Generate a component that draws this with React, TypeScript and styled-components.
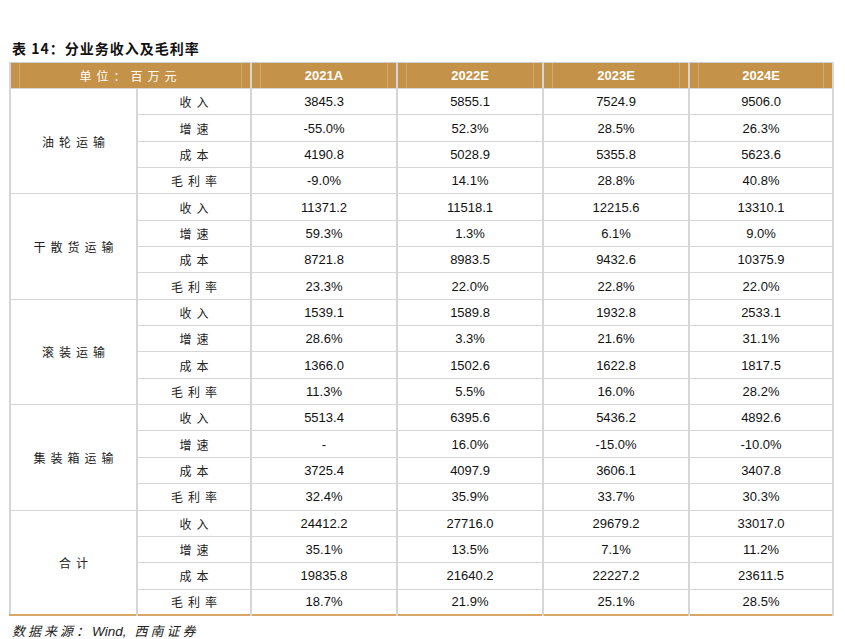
import React from 'react'
import styled, { createGlobalStyle } from 'styled-components'

const GRID = '#d6d6d6'
const GOLD = '#c49248'
const CJK = '"Noto Sans CJK SC", "Liberation Sans", sans-serif'
const NUM = '"Liberation Sans", Arial, sans-serif'

const GlobalStyle = createGlobalStyle`
  html, body {
    margin: 0;
    padding: 0;
    background: #ffffff;
  }
`

const Page = styled.div`
  width: 845px;
  height: 639px;
  padding: 38px 0 0 9px;
  box-sizing: border-box;
  overflow: hidden;
`

const Title = styled.div`
  font-family: ${CJK};
  font-weight: 700;
  font-size: 14px;
  line-height: 20px;
  color: #111;
  padding-left: 3px;
  margin-bottom: 4px;
  letter-spacing: 1px;
`

const Table = styled.table`
  width: 823px;
  table-layout: fixed;
  border-collapse: collapse;
  border-top: 1px solid #cfcfcf;
  border-left: 2px solid ${GRID};
  border-right: 2px solid ${GRID};
  border-bottom: 2px solid #d8a765;
`

const HeadRow = styled.tr`
  height: 25px;
  background: ${GOLD};
`

const HeadCell = styled.th<{ cjk?: boolean }>`
  padding: 0 8px;
  border-left: 2px solid ${GRID};
  border-right: 2px solid ${GRID};
  color: #fff;
  font-family: ${(p) => (p.cjk ? CJK : NUM)};
  font-weight: ${(p) => (p.cjk ? 400 : 700)};
  font-size: ${(p) => (p.cjk ? '12px' : '13px')};
  letter-spacing: ${(p) => (p.cjk ? '5px' : '0')};
  text-align: center;
`

const HeadInner = styled.div`
  height: 25px;
  line-height: 25px;
  border-left: 1px solid rgba(255, 255, 255, 0.22);
  border-right: 1px solid rgba(255, 255, 255, 0.22);
`

const Row = styled.tr`
  height: 26.35px;
`

const GroupCell = styled.td`
  border: 1px solid ${GRID};
  border-right-width: 2px;
  font-family: ${CJK};
  font-size: 12px;
  letter-spacing: 5px;
  color: #222;
  text-align: center;
  vertical-align: middle;
  padding: 0 0 0 5px;
`

const LabelCell = styled.td`
  border-top: 1px solid ${GRID};
  border-bottom: 1px solid ${GRID};
  border-right: 2px solid ${GRID};
  font-family: ${CJK};
  font-size: 12px;
  letter-spacing: 5px;
  color: #222;
  text-align: center;
  padding: 0 0 0 5px;
`

const ValueCell = styled.td`
  border-top: 1px solid ${GRID};
  border-bottom: 1px solid ${GRID};
  border-right: 2px solid ${GRID};
  font-family: ${NUM};
  font-size: 13px;
  color: #111;
  text-align: center;
  padding: 0;
`

const Source = styled.div`
  margin-top: 6px;
  padding-left: 3px;
  font-family: ${CJK};
  font-style: italic;
  font-size: 13px;
  line-height: 18px;
  letter-spacing: 3px;
  color: #222;
`

const SourceLatin = styled.span`
  font-family: ${NUM};
  font-size: 13.5px;
  letter-spacing: 0;
  margin-right: 8px;
`

const metrics = ['收入', '增速', '成本', '毛利率']

const groups: { name: string; rows: string[][] }[] = [
  {
    name: '油轮运输',
    rows: [
      ['3845.3', '5855.1', '7524.9', '9506.0'],
      ['-55.0%', '52.3%', '28.5%', '26.3%'],
      ['4190.8', '5028.9', '5355.8', '5623.6'],
      ['-9.0%', '14.1%', '28.8%', '40.8%'],
    ],
  },
  {
    name: '干散货运输',
    rows: [
      ['11371.2', '11518.1', '12215.6', '13310.1'],
      ['59.3%', '1.3%', '6.1%', '9.0%'],
      ['8721.8', '8983.5', '9432.6', '10375.9'],
      ['23.3%', '22.0%', '22.8%', '22.0%'],
    ],
  },
  {
    name: '滚装运输',
    rows: [
      ['1539.1', '1589.8', '1932.8', '2533.1'],
      ['28.6%', '3.3%', '21.6%', '31.1%'],
      ['1366.0', '1502.6', '1622.8', '1817.5'],
      ['11.3%', '5.5%', '16.0%', '28.2%'],
    ],
  },
  {
    name: '集装箱运输',
    rows: [
      ['5513.4', '6395.6', '5436.2', '4892.6'],
      ['-', '16.0%', '-15.0%', '-10.0%'],
      ['3725.4', '4097.9', '3606.1', '3407.8'],
      ['32.4%', '35.9%', '33.7%', '30.3%'],
    ],
  },
  {
    name: '合计',
    rows: [
      ['24412.2', '27716.0', '29679.2', '33017.0'],
      ['35.1%', '13.5%', '7.1%', '11.2%'],
      ['19835.8', '21640.2', '22227.2', '23611.5'],
      ['18.7%', '21.9%', '25.1%', '28.5%'],
    ],
  },
]

const years = ['2021A', '2022E', '2023E', '2024E']

export default function App() {
  return (
    <Page>
      <GlobalStyle />
      <Title>表 14：分业务收入及毛利率</Title>
      <Table>
        <colgroup>
          <col style={{ width: 127 }} />
          <col style={{ width: 114 }} />
          <col style={{ width: 146 }} />
          <col style={{ width: 146 }} />
          <col style={{ width: 146 }} />
          <col style={{ width: 144 }} />
        </colgroup>
        <thead>
          <HeadRow>
            <HeadCell colSpan={2} cjk>
              <HeadInner>单位：百万元</HeadInner>
            </HeadCell>
            {years.map((y) => (
              <HeadCell key={y}>
                <HeadInner>{y}</HeadInner>
              </HeadCell>
            ))}
          </HeadRow>
        </thead>
        <tbody>
          {groups.map((g) =>
            g.rows.map((vals, i) => (
              <Row key={g.name + i}>
                {i === 0 && <GroupCell rowSpan={4}>{g.name}</GroupCell>}
                <LabelCell>{metrics[i]}</LabelCell>
                {vals.map((v, j) => (
                  <ValueCell key={j}>{v}</ValueCell>
                ))}
              </Row>
            ))
          )}
        </tbody>
      </Table>
      <Source>
        数据来源：<SourceLatin>Wind,</SourceLatin>西南证券
      </Source>
    </Page>
  )
}
